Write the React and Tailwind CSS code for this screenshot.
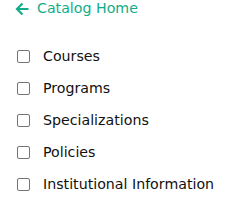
export default function App() {
    const items = ['Courses', 'Programs', 'Specializations', 'Policies', 'Institutional Information']

    return (
        <div className="w-[235px] h-[201px] bg-white font-['DejaVu_Sans',sans-serif] text-[14.2px]">
            <a className="flex items-center h-[17px] pl-[15px] text-[#10ad88]">
                <svg width="14" height="14" viewBox="0 0 14 14" fill="none" stroke="currentColor" strokeWidth="2.2" className="mr-[8px]">
                    <path d="M13.5 7H2.5M7.5 1.5L2 7l5.5 5.5" />
                </svg>
                <span>Catalog Home</span>
            </a>
            <ul className="mt-[31px] pl-[17px] flex flex-col gap-[15px]">
                {items.map((item) => (
                    <li key={item} className="flex items-center h-[17px] text-[#111]">
                        <span className="w-[13px] h-[13px] border border-[#767676] rounded-[2px] bg-white shrink-0" />
                        <span className="ml-[13px]">{item}</span>
                    </li>
                ))}
            </ul>
        </div>
    )
}
